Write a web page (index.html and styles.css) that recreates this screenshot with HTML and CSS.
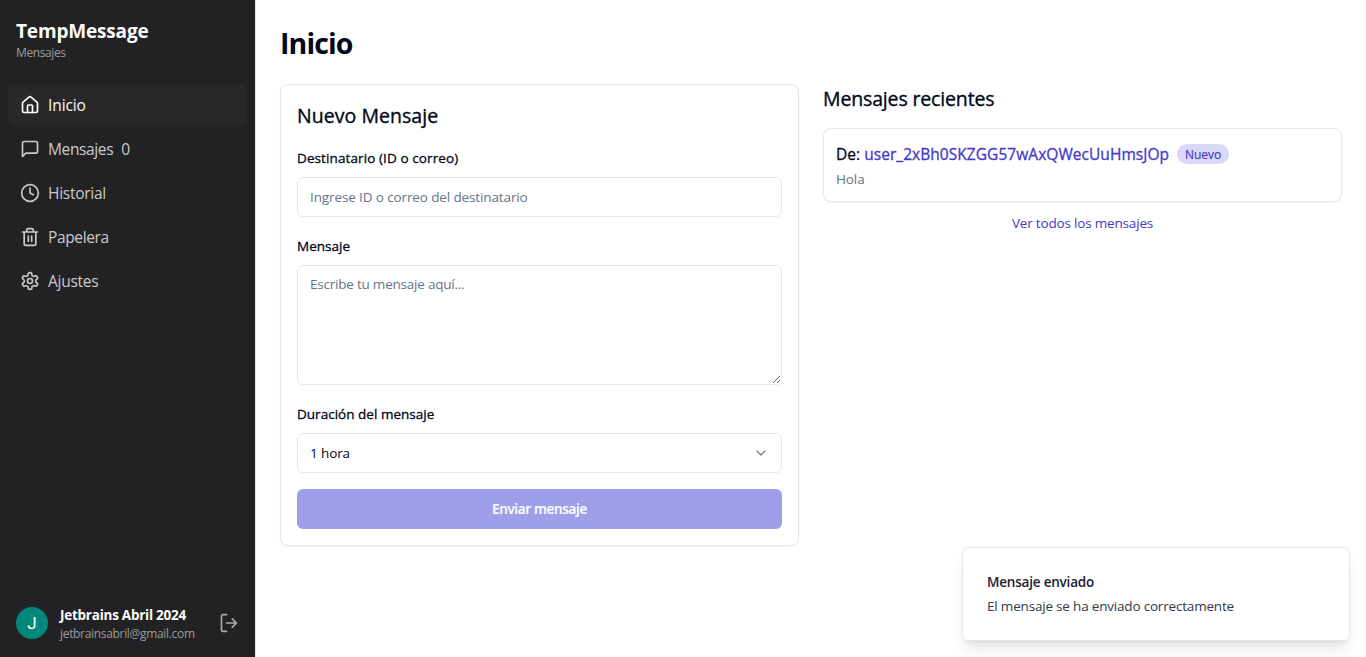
FILE: index.html
```html
<!DOCTYPE html>
<html lang="es">
<head>
<meta charset="utf-8">
<title>TempMessage</title>
<link rel="stylesheet" href="styles.css">
</head>
<body>
<div class="app">
  <aside class="sidebar">
    <header class="brand">
      <div class="brand-name"><span>TempMessage</span></div>
      <div class="brand-sub"><span>Mensajes</span></div>
    </header>
    <nav class="nav">
      <a class="nav-item active"><svg class="icon" viewBox="0 0 24 24"><path d="M15 21v-8a1 1 0 0 0-1-1h-4a1 1 0 0 0-1 1v8"/><path d="M3 10a2 2 0 0 1 .709-1.528l7-5.999a2 2 0 0 1 2.582 0l7 5.999A2 2 0 0 1 21 10v9a2 2 0 0 1-2 2H5a2 2 0 0 1-2-2z"/></svg><span>Inicio</span></a>
      <a class="nav-item"><svg class="icon" viewBox="0 0 24 24"><path d="M21 15a2 2 0 0 1-2 2H7l-4 4V5a2 2 0 0 1 2-2h14a2 2 0 0 1 2 2z"/></svg><span class="nav-tight">Mensajes</span><span>0</span></a>
      <a class="nav-item"><svg class="icon" viewBox="0 0 24 24"><circle cx="12" cy="12" r="10"/><path d="M12 6v6l4 2"/></svg><span>Historial</span></a>
      <a class="nav-item"><svg class="icon" viewBox="0 0 24 24"><path d="M3 6h18M19 6v14a2 2 0 0 1-2 2H7a2 2 0 0 1-2-2V6M8 6V4a2 2 0 0 1 2-2h4a2 2 0 0 1 2 2v2M10 11v6M14 11v6"/></svg><span class="nav-tight">Papelera</span></a>
      <a class="nav-item"><svg class="icon" viewBox="0 0 24 24"><path d="M12.22 2h-.44a2 2 0 0 0-2 2v.18a2 2 0 0 1-1 1.73l-.43.25a2 2 0 0 1-2 0l-.15-.08a2 2 0 0 0-2.73.73l-.22.38a2 2 0 0 0 .73 2.73l.15.1a2 2 0 0 1 1 1.72v.51a2 2 0 0 1-1 1.74l-.15.09a2 2 0 0 0-.73 2.73l.22.38a2 2 0 0 0 2.73.73l.15-.08a2 2 0 0 1 2 0l.43.25a2 2 0 0 1 1 1.73V20a2 2 0 0 0 2 2h.44a2 2 0 0 0 2-2v-.18a2 2 0 0 1 1-1.73l.43-.25a2 2 0 0 1 2 0l.15.08a2 2 0 0 0 2.73-.73l.22-.39a2 2 0 0 0-.73-2.73l-.15-.08a2 2 0 0 1-1-1.74v-.5a2 2 0 0 1 1-1.74l.15-.09a2 2 0 0 0 .73-2.73l-.22-.38a2 2 0 0 0-2.73-.73l-.15.08a2 2 0 0 1-2 0l-.43-.25a2 2 0 0 1-1-1.73V4a2 2 0 0 0-2-2z"/><circle cx="12" cy="12" r="3"/></svg><span>Ajustes</span></a>
    </nav>
    <footer class="account">
      <div class="avatar">J</div>
      <div class="account-text">
        <div class="account-name"><span>Jetbrains Abril 2024</span></div>
        <div class="account-mail"><span>jetbrainsabril@gmail.com</span></div>
      </div>
      <svg class="icon logout" viewBox="0 0 24 24"><path d="M9 22H5a2 2 0 0 1-2-2V4a2 2 0 0 1 2-2h4M16 17l5-5-5-5M21 12H9"/></svg>
    </footer>
  </aside>
  <main class="main">
    <h1 class="page-title"><span>Inicio</span></h1>
    <div class="columns">
      <section class="card composer">
        <h2 class="heading"><span>Nuevo Mensaje</span></h2>
        <label class="label label-to"><span>Destinatario (ID o correo)</span></label>
        <input class="field" placeholder="Ingrese ID o correo del destinatario">
        <label class="label"><span>Mensaje</span></label>
        <textarea class="field area" placeholder="Escribe tu mensaje aquí..."></textarea>
        <label class="label label-duration"><span>Duración del mensaje</span></label>
        <div class="field select"><span>1 hora</span><svg class="chevron" viewBox="0 0 24 24"><path d="m6 9 6 6 6-6"/></svg></div>
        <button class="send" type="button"><span>Enviar mensaje</span></button>
      </section>
      <section class="recent">
        <h2 class="heading recent-heading"><span>Mensajes recientes</span></h2>
        <article class="card message">
          <div class="message-head"><span class="from">De:</span><span class="sender">user_2xBh0SKZGG57wAxQWecUuHmsJOp</span><span class="badge">Nuevo</span></div>
          <div class="message-body"><span>Hola</span></div>
        </article>
        <a class="all-link"><span>Ver todos los mensajes</span></a>
      </section>
    </div>
  </main>
  <div class="toast">
    <div class="toast-title"><span>Mensaje enviado</span></div>
    <div class="toast-text"><span>El mensaje se ha enviado correctamente</span></div>
  </div>
</div>
</body>
</html>
```
FILE: styles.css
```css
* { box-sizing: border-box; }
body { margin: 0; font-family: "Open Sans", "Noto Sans", sans-serif; font-size: 13.5px; color: #020817; background: #fff; }
h1, h2 { margin: 0; }
.app { display: flex; height: 657px; overflow: hidden; }
.icon { width: 20px; height: 20px; flex: none; fill: none; stroke: currentColor; stroke-width: 2; stroke-linecap: round; stroke-linejoin: round; }

.sidebar { width: 256px; flex: none; display: flex; flex-direction: column; background: #222224; color: #cacaca; border-right: 1px solid #e2e8f0; }
.brand { height: 77px; padding: 17px 16px 0; border-bottom: 1px solid #28282a; }
.brand-name { font-size: 19px; line-height: 28px; font-weight: 700; color: #fafafa; letter-spacing: -0.17px; }
.brand-sub { font-size: 12px; line-height: 16px; color: #9b9b9c; letter-spacing: -0.4px; }
.nav { flex: 1; padding: 8px; display: flex; flex-direction: column; gap: 4px; }
.nav-item { height: 40px; padding: 0 12px; display: flex; align-items: center; gap: 8px; border-radius: 6px; font-size: 15.5px; letter-spacing: -0.27px; }
.nav-tight { letter-spacing: -0.37px; }
.active { background: #28282a; color: #fafafa; letter-spacing: -0.1px; }
.account { height: 69px; padding: 0 16px; display: flex; align-items: center; border-top: 1px solid #28282a; }
.avatar { width: 32px; height: 32px; flex: none; border-radius: 50%; background: #00897b; color: #fff; font-family: Roboto, sans-serif; font-size: 17px; line-height: 33px; text-align: center; }
.account-text { margin-left: 12px; flex: 1; white-space: nowrap; padding-top: 1px; }
.account-name { font-size: 13.5px; line-height: 20px; font-weight: 700; color: #fafafa; letter-spacing: -0.25px; }
.account-mail { padding-top: 1px; font-size: 12px; line-height: 16px; color: #9b9b9c; letter-spacing: -0.32px; }
.logout { color: #aaaaab; }

.main { flex: 1; padding: 24px; }
.page-title { height: 36px; padding-top: 1px; font-size: 28.5px; line-height: 37px; font-weight: 700; letter-spacing: -0.88px; }
.columns { margin-top: 24px; display: grid; grid-template-columns: 1fr 1fr; gap: 24px; align-items: start; }
.card { border: 1px solid #e2e8f0; border-radius: 8px; background: #fff; box-shadow: 0 1px 2px rgba(0, 0, 0, .05); }
.composer { height: 462px; padding: 17px 16px 16px; display: flex; flex-direction: column; }
.heading { font-size: 19.5px; line-height: 28px; font-weight: 500; letter-spacing: 0.05px; -webkit-text-stroke: 0.35px currentColor; }
.label { margin-top: 19px; height: 20px; line-height: 20px; font-size: 13.5px; font-weight: 500; letter-spacing: 0.02px; -webkit-text-stroke: 0.3px currentColor; }
.field { width: 100%; height: 40px; margin-top: 9px; flex: none; padding: 8px 12px; border: 1px solid #e2e8f0; border-radius: 6px; background: #fff; font-family: inherit; font-size: 13.5px; line-height: 20px; letter-spacing: -0.12px; color: #020817; }
.field::placeholder { color: #64748b; opacity: 1; }
.label-to { margin-top: 18px; letter-spacing: 0.1px; }
.area { height: 120px; resize: vertical; display: block; letter-spacing: -0.22px; }
.select { display: flex; align-items: center; justify-content: space-between; }
.chevron { width: 16px; height: 16px; fill: none; stroke: #808086; stroke-width: 2; stroke-linecap: round; stroke-linejoin: round; }
.send { margin-top: 16px; height: 40px; border: 0; border-radius: 6px; background: #9f9fe9; color: #fcfcff; font-family: inherit; font-size: 13.5px; font-weight: 600; letter-spacing: -0.31px; -webkit-text-stroke: 0.2px currentColor; }
.recent-heading { height: 44px; padding-top: 1px; letter-spacing: -0.15px; }
.message { height: 74px; padding: 12px; }
.message-head { height: 26px; display: flex; align-items: center; font-size: 15.5px; font-weight: 500; letter-spacing: 0.05px; white-space: nowrap; -webkit-text-stroke: 0.3px currentColor; }
.sender { margin-left: 4px; color: #4338ca; }
.badge { margin-left: 8px; width: 52px; text-align: center; height: 20px; border-radius: 10px; background: #d9d9f7; color: #4338ca; font-size: 12px; line-height: 21px; letter-spacing: 0; -webkit-text-stroke: 0.15px currentColor; }
.message-body { padding-top: 2px; line-height: 20px; letter-spacing: -0.1px; color: #64748b; }
.all-link { display: block; margin-top: 11px; line-height: 20px; letter-spacing: -0.18px; text-align: center; color: #4338ca; }
.toast { position: absolute; left: 962px; top: 547px; width: 388px; height: 94px; padding: 24px; border: 1px solid #e2e8f0; border-radius: 6px; background: #fff; box-shadow: 0 10px 15px -3px rgba(0, 0, 0, .1), 0 4px 6px -4px rgba(0, 0, 0, .1); }
.toast-title { line-height: 20px; font-weight: 600; letter-spacing: -0.2px; color: #1b2030; }
.toast-text { margin-top: 4px; line-height: 20px; letter-spacing: -0.19px; color: #343846; }
```
